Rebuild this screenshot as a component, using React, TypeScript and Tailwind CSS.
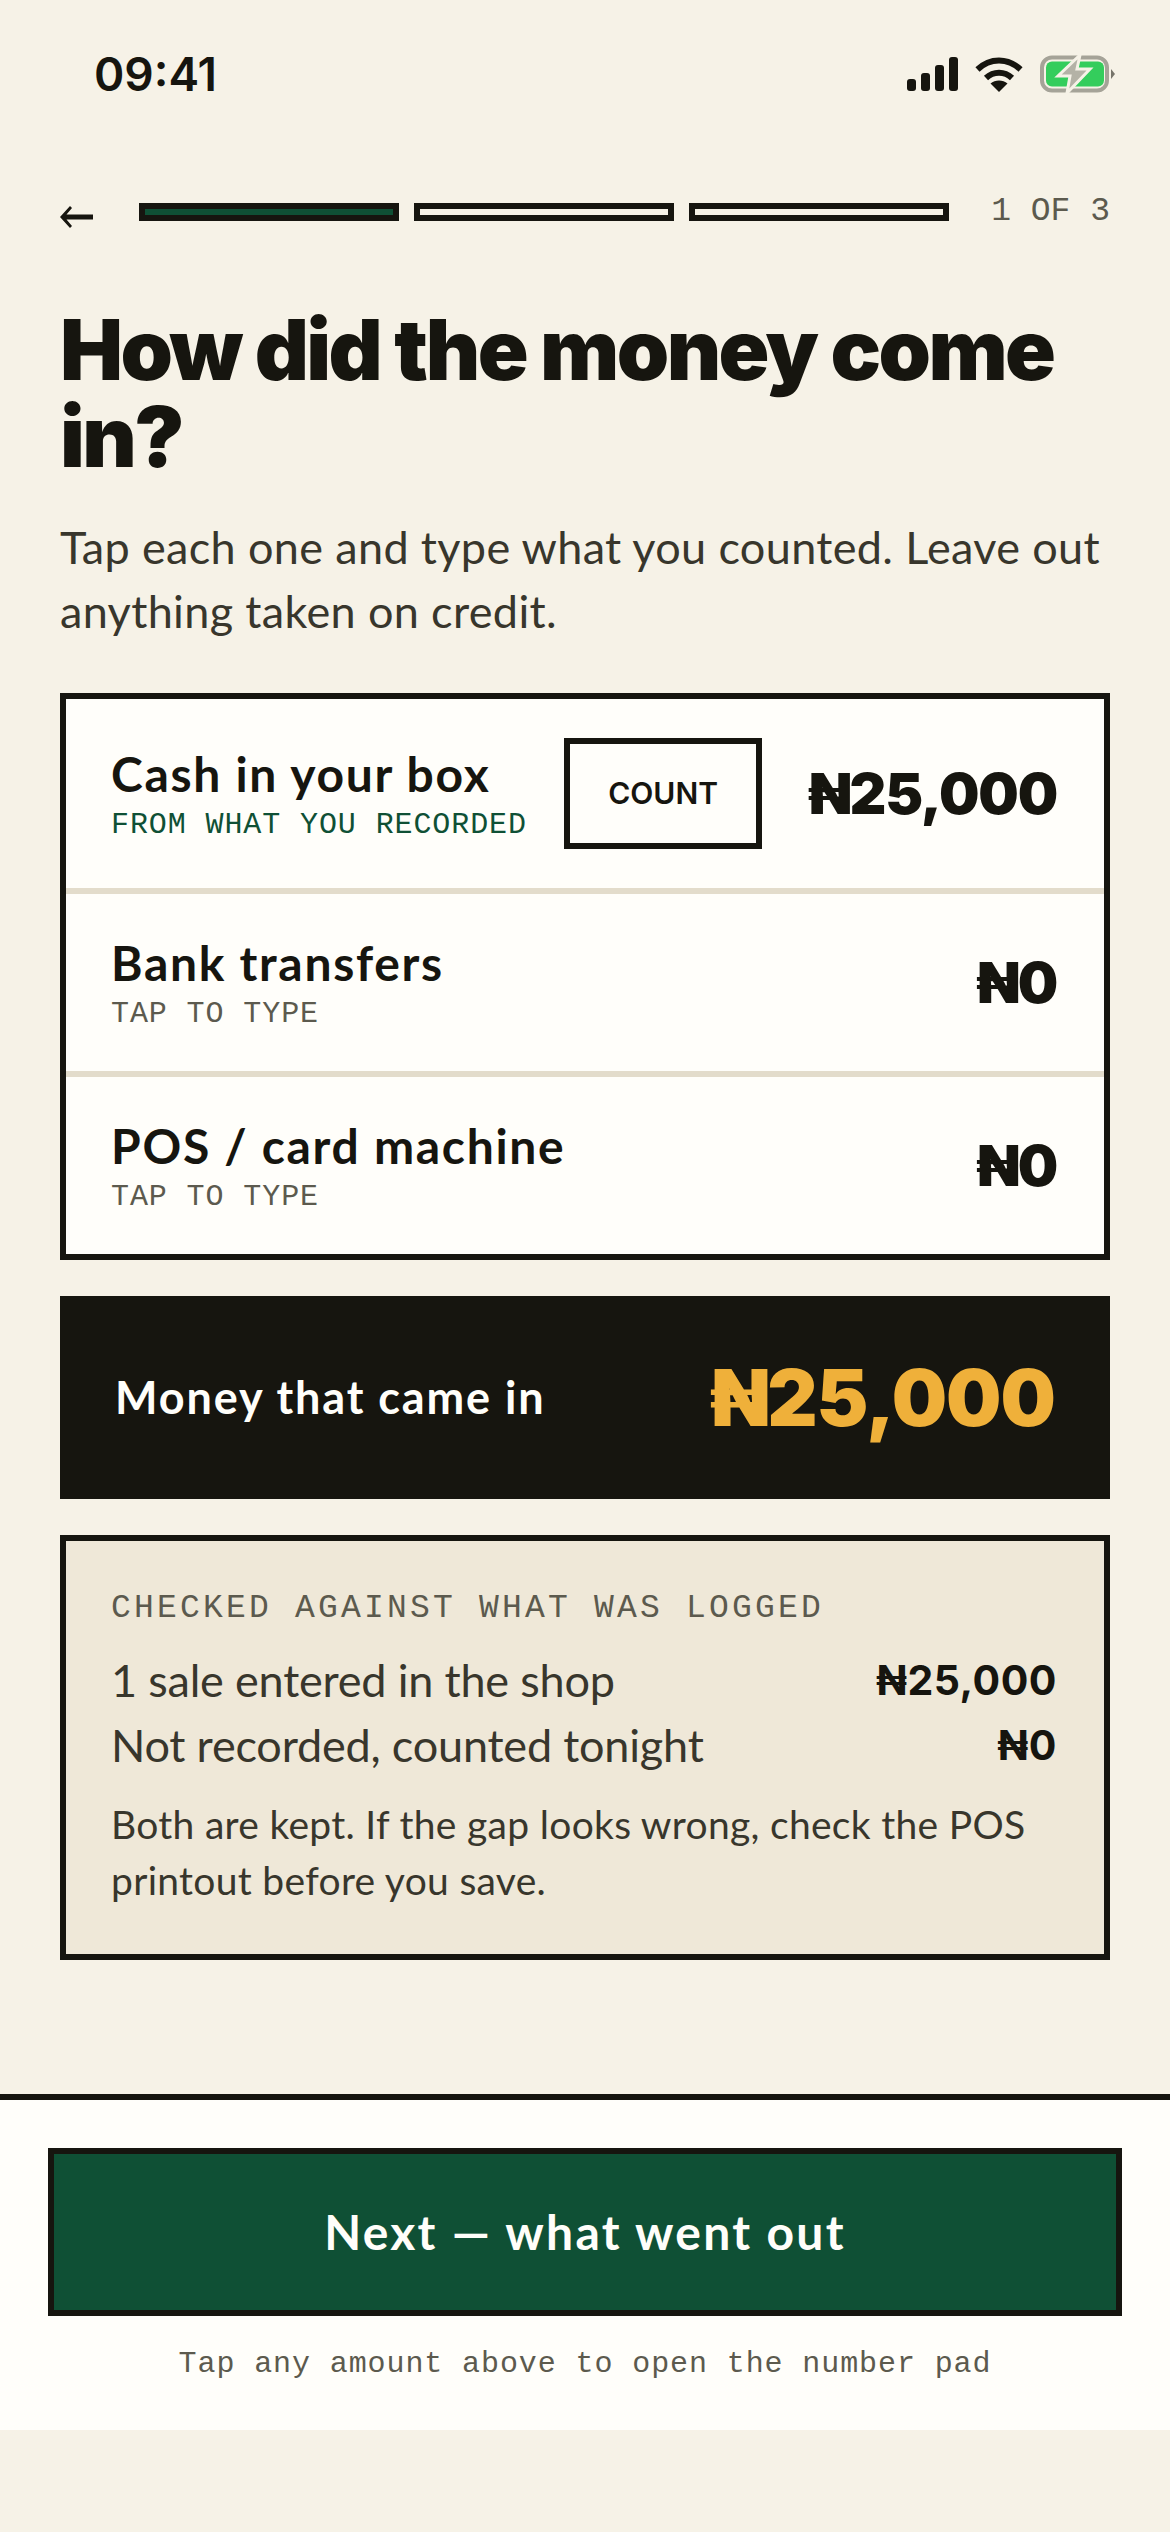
const display = "font-['Inter',sans-serif]";
const body = "font-['Lato','Open_Sans',sans-serif]";
const mono = "font-['Liberation_Mono',monospace]";

function StatusIcons() {
  return (
    <div className="flex items-center">
      <svg width="51" height="34" viewBox="0 0 51 34" className="text-[#16150f]" fill="currentColor">
        <rect x="0" y="22" width="9" height="12" rx="3" />
        <rect x="14" y="16" width="9" height="18" rx="3" />
        <rect x="28" y="8" width="9" height="26" rx="3" />
        <rect x="42" y="0" width="9" height="34" rx="3" />
      </svg>
      <svg width="48" height="36" viewBox="0 0 48 36" className="ml-[17px]" fill="none" stroke="#16150f" strokeWidth="6">
        <path d="M2.5 13.5C15 1.5 33 1.5 45.5 13.5" />
        <path d="M11 22C18.500 15 29.500 15 37 22" />
        <path d="M24 36L15.500 27.500C20 23.500 28 23.500 32.500 27.500Z" fill="#16150f" stroke="none" />
      </svg>
      <svg width="75" height="38" viewBox="0 0 75 38" className="ml-[17px]">
        <rect x="2" y="2.500" width="65" height="33" rx="10" fill="none" stroke="#a5a398" strokeWidth="4" />
        <rect x="6" y="6.500" width="58" height="25" rx="6" fill="#34cd5c" />
        <path d="M71 14L75 19L71 24Z" fill="#77756b" />
        <path d="M40 0L18 21H30L27 38L50 14H37Z" fill="#b4b2a6" stroke="#f6f2e7" strokeWidth="3" />
      </svg>
    </div>
  );
}

function Progress() {
  return (
    <div className="flex items-center px-[60px] mt-[104px] h-[30px]">
      <svg width="34" height="22" viewBox="0 0 34 22" className="mt-[10px] mr-[45px] shrink-0" fill="#16150f">
        <path d="M10 0L12 2L6.500 8.500H33V13.500H6.500L12 20L10 22L0 11Z" />
      </svg>
      <div className="flex gap-[15px] flex-1">
        <div className="h-[18px] flex-1 border-[6px] border-[#16150f] bg-[#0f5035]" />
        <div className="h-[18px] flex-1 border-[6px] border-[#16150f] bg-[#f6f2e7]" />
        <div className="h-[18px] flex-1 border-[6px] border-[#16150f] bg-[#f6f2e7]" />
      </div>
      <div className={`${mono} ml-[42px] text-[33px] leading-[30px] text-[#5c5a4e] whitespace-nowrap`}>1 OF 3</div>
    </div>
  );
}

function Row({ name, note, amount, live }: { name: string; note: string; amount: string; live?: boolean }) {
  return (
    <div className={`flex items-center pl-[45px] pr-[47px] ${live ? "h-[189px]" : "h-[177px]"}`}>
      <div className="flex-1 min-w-0">
        <div className={`${body} text-[48px] leading-[58px] font-bold tracking-[1.7px] text-[#16150f] whitespace-nowrap`}>{name}</div>
        <div className={`${mono} mt-[4px] text-[30px] leading-[36px] tracking-[0.9px] whitespace-nowrap ${live ? "text-[#0f5035]" : "text-[#5c5a4e]"}`}>{note}</div>
      </div>
      {live && (
        <div className={`${display} w-[198px] h-[111px] mr-[46px] border-[6px] border-[#16150f] flex items-center justify-center text-[30px] font-semibold text-[#16150f]`}>
          COUNT
        </div>
      )}
      <div className={`${display} text-[57px] font-black tracking-[-1.2px] text-[#16150f]`}>{amount}</div>
    </div>
  );
}

function CheckRow({ label, amount }: { label: string; amount: string }) {
  return (
    <div className="flex items-center justify-between h-[65px]">
      <div className={`${body} text-[45px] tracking-[-0.2px] text-[#38362c]`}>{label}</div>
      <div className={`${display} text-[41px] font-bold tracking-[0.5px] text-[#16150f]`}>{amount}</div>
    </div>
  );
}

export default function App() {
  return (
    <div className="w-[1170px] h-[2532px] bg-[#f6f2e7] flex flex-col overflow-hidden">
      <div className="flex items-center justify-between h-[38px] mt-[55px] pl-[94px] pr-[55px]">
        <div className={`${display} text-[46px] font-semibold leading-none text-[#16150f]`}>09:41</div>
        <StatusIcons />
      </div>

      <Progress />

      <div className="px-[60px] flex-1">
        <h1 className={`${display} mt-[79px] text-[84px] leading-[87px] font-black tracking-[-2.6px] text-[#16150f]`}>
          How did the money come in?
        </h1>
        <p className={`${body} mt-[35px] text-[45px] leading-[64px] tracking-[0.35px] text-[#38362c]`}>
          Tap each one and type what you counted. Leave out anything taken on credit.
        </p>

        <div className="mt-[50px] border-[6px] border-[#16150f] bg-[#fffefa]">
          <Row live name="Cash in your box" note="FROM WHAT YOU RECORDED" amount="₦25,000" />
          <div className="h-[6px] bg-[#e3dccb]" />
          <Row name="Bank transfers" note="TAP TO TYPE" amount="₦0" />
          <div className="h-[6px] bg-[#e3dccb]" />
          <Row name="POS / card machine" note="TAP TO TYPE" amount="₦0" />
        </div>

        <div className="mt-[36px] h-[203px] bg-[#16150f] flex items-center justify-between px-[55px]">
          <div className={`${body} text-[45px] font-bold tracking-[1.9px] text-[#fffefa]`}>Money that came in</div>
          <div className={`${display} text-[78px] font-black tracking-[-1px] text-[#efb03a]`}>₦25,000</div>
        </div>

        <div className="mt-[36px] h-[425px] border-[6px] border-[#16150f] bg-[#efe8d8] pt-[48px] pl-[45px] pr-[47px]">
          <div className={`${mono} text-[33px] leading-[40px] tracking-[3.2px] text-[#5c5a4e]`}>CHECKED AGAINST WHAT WAS LOGGED</div>
          <div className="mt-[19px]">
            <CheckRow label="1 sale entered in the shop" amount="₦25,000" />
            <CheckRow label="Not recorded, counted tonight" amount="₦0" />
          </div>
          <p className={`${body} mt-[18px] text-[39px] leading-[56px] tracking-[0.3px] text-[#38362c]`}>
            Both are kept. If the gap looks wrong, check the POS printout before you save.
          </p>
        </div>
      </div>

      <div className="mb-[102px] h-[336px] bg-[#fffefa] border-t-[6px] border-[#16150f] px-[48px] pt-[48px]">
        <div className={`${body} h-[168px] bg-[#0f5035] border-[6px] border-[#16150f] flex items-center justify-center text-[48px] font-bold tracking-[2.3px] text-[#fffefa]`}>
          Next — what went out
        </div>
        <div className={`${mono} mt-[30px] text-center text-[30px] leading-[36px] tracking-[0.9px] text-[#5c5a4e]`}>Tap any amount above to open the number pad</div>
      </div>
    </div>
  );
}
